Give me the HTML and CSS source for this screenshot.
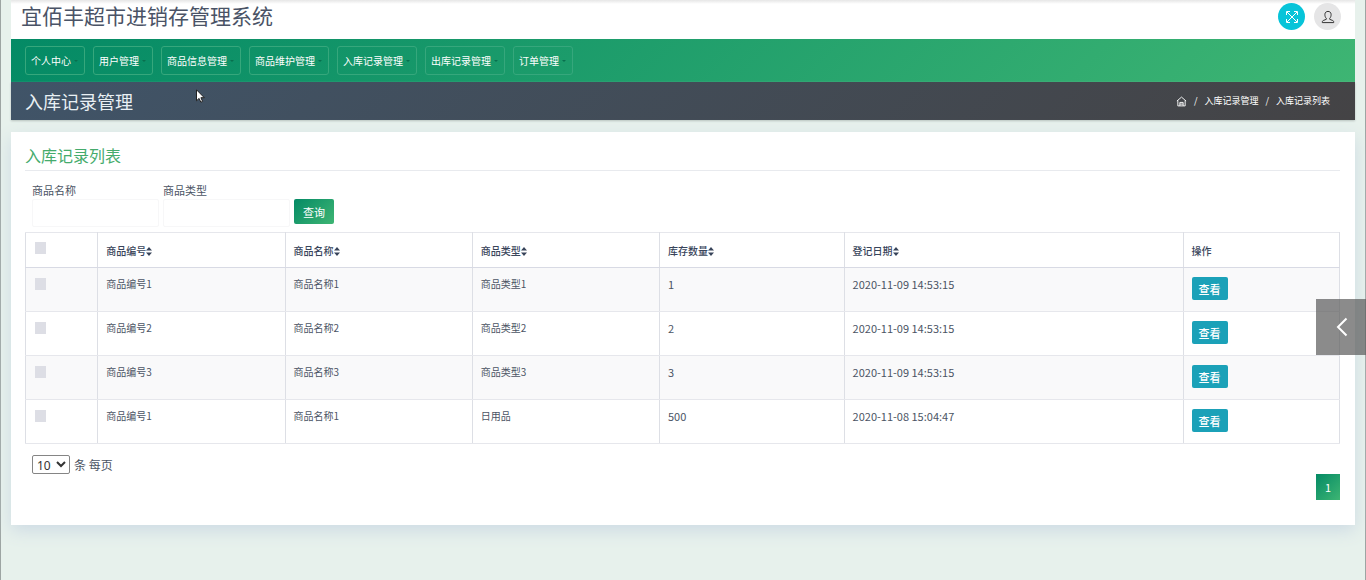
FILE: index.html
```html
<!DOCTYPE html>
<html lang="zh-CN">
<head>
<meta charset="utf-8">
<meta name="viewport" content="width=device-width, initial-scale=1">
<title>入库记录管理</title>
<link rel="stylesheet" href="styles.css">
</head>
<body>
<svg class="sprite" aria-hidden="true">
  <symbol id="sort" viewBox="0 0 6 9"><path d="M3 0 6 3.500H0zM3 9 0 5.500h6z"/></symbol>
</svg>
<div class="page">
  <header class="header">
    <h1 class="brand">宜佰丰超市进销存管理系统</h1>
    <div class="tools">
      <button class="tool tool-full" aria-label="全屏"><svg viewBox="0 0 14 14"><path d="M1.5 5V1.5H5M9 1.5h3.5V5M12.5 9v3.5H9M5 12.5H1.5V9M2 2l10 10M12 2 2 12"/></svg></button>
      <button class="tool tool-user" aria-label="用户"><svg viewBox="0 0 14 14"><path d="M5.300 8.300C4.300 7.500 3.900 6 3.900 4.500 3.900 2.500 5.200 1.400 7 1.400s3.100 1.100 3.100 3.100c0 1.500-.4 3-1.400 3.800v1l3 1.200c.8.300 1 .9 1 2.100H1.300c0-1.200.2-1.800 1-2.100l3-1.200z"/></svg></button>
    </div>
  </header>
  <nav class="nav">
    <button class="nav-item">个人中心<i class="caret"></i></button>
    <button class="nav-item">用户管理<i class="caret"></i></button>
    <button class="nav-item">商品信息管理<i class="caret"></i></button>
    <button class="nav-item">商品维护管理<i class="caret"></i></button>
    <button class="nav-item">入库记录管理<i class="caret"></i></button>
    <button class="nav-item">出库记录管理<i class="caret"></i></button>
    <button class="nav-item">订单管理<i class="caret"></i></button>
  </nav>
  <div class="titlebar">
    <h2 class="page-title">入库记录管理</h2>
    <div class="crumbs">
      <a href="#" aria-label="首页"><svg viewBox="0 0 12 12"><path d="M1 5.500 6 1.200l5 4.300M2 4.800v6h8v-6M4.200 10.800V7h3.600v3.800M4.200 8.800h3.600"/></svg></a>
      <span>/</span><a href="#">入库记录管理</a><span>/</span><span>入库记录列表</span>
    </div>
  </div>
  <main class="card">
    <h3 class="card-title">入库记录列表</h3>
    <form class="search">
      <div class="field"><label for="name">商品名称</label><input id="name" type="text"></div>
      <div class="field"><label for="type">商品类型</label><input id="type" type="text"></div>
      <button class="query" type="button">查询</button>
    </form>
    <table class="table">
      <colgroup><col class="c-check"><col class="c-text"><col class="c-text"><col class="c-text"><col class="c-count"><col class="c-date"><col class="c-action"></colgroup>
      <thead>
        <tr>
          <th><input type="checkbox" aria-label="全选"></th>
          <th>商品编号<svg class="sort"><use href="#sort"/></svg></th>
          <th>商品名称<svg class="sort"><use href="#sort"/></svg></th>
          <th>商品类型<svg class="sort"><use href="#sort"/></svg></th>
          <th>库存数量<svg class="sort"><use href="#sort"/></svg></th>
          <th>登记日期<svg class="sort"><use href="#sort"/></svg></th>
          <th>操作</th>
        </tr>
      </thead>
      <tbody>
        <tr><td><input type="checkbox" aria-label="选择第1行"></td><td>商品编号1</td><td>商品名称1</td><td>商品类型1</td><td class="num">1</td><td class="num">2020-11-09 14:53:15</td><td><button class="view">查看</button></td></tr>
        <tr><td><input type="checkbox" aria-label="选择第2行"></td><td>商品编号2</td><td>商品名称2</td><td>商品类型2</td><td class="num">2</td><td class="num">2020-11-09 14:53:15</td><td><button class="view">查看</button></td></tr>
        <tr><td><input type="checkbox" aria-label="选择第3行"></td><td>商品编号3</td><td>商品名称3</td><td>商品类型3</td><td class="num">3</td><td class="num">2020-11-09 14:53:15</td><td><button class="view">查看</button></td></tr>
        <tr><td><input type="checkbox" aria-label="选择第4行"></td><td>商品编号1</td><td>商品名称1</td><td>日用品</td><td class="num">500</td><td class="num">2020-11-08 15:04:47</td><td><button class="view">查看</button></td></tr>
      </tbody>
    </table>
    <div class="page-size">
      <select id="size"><option>10</option><option>25</option><option>50</option></select>
      <label for="size">条 每页</label>
    </div>
    <div class="pager"><button class="pager-item">1</button></div>
  </main>
</div>
<button class="drawer" aria-label="展开"><svg viewBox="0 0 12 20"><path d="M10.500 1.500 2 10l8.500 8.500"/></svg></button>
<svg class="pointer" viewBox="0 0 9 14" aria-hidden="true"><path d="M.5.8v11l2.600-2.400 1.700 3.800 1.800-.8-1.700-3.700h3.400z"/></svg>
</body>
</html>
```
FILE: styles.css
```css
* { box-sizing: border-box; }
body {
  margin: 0;
  font-family: "Noto Sans CJK SC", "Noto Sans", sans-serif;
  font-size: 10px;
  line-height: 18px;
  color: #4b5464;
  background: #e7f1ec;
}
h1, h2, h3 { margin: 0; font-weight: 400; }
button, input, select { font-family: inherit; }
button { cursor: pointer; }
svg { fill: none; stroke: currentColor; }
.sprite { display: none; }

.page {
  min-height: 100vh;
  padding: 0 10px;
  border-left: 1px solid #9da5a3;
  border-right: 1px solid #9da5a3;
}
.header {
  display: flex;
  justify-content: space-between;
  align-items: flex-end;
  padding: 0 14px 9px 10px;
  background: linear-gradient(#e6e6e6, #fff 4px);
}
.brand { font-size: 21px; line-height: 30px; color: #4a5366; }
.tools { display: flex; gap: 9px; }
.tool {
  display: grid;
  place-items: center;
  width: 27px;
  height: 27px;
  padding: 0;
  border: 0;
  border-radius: 50%;
}
.tool svg { width: 14px; height: 14px; }
.tool-full { background: #07c4d9; color: #fff; }
.tool-user { background: #e5e5e6; color: #333; }

.nav {
  display: flex;
  gap: 8px;
  padding: 7px 14px;
  background: linear-gradient(135deg, #048a65, #3eb573);
}
.nav-item {
  display: flex;
  align-items: center;
  gap: 3px;
  height: 29px;
  padding: 0 6px 0 5px;
  border: 1px solid #36a77c;
  border-radius: 3px;
  background: transparent;
  color: #fff;
  font-size: 10px;
}
.caret { border: 2px solid transparent; border-top-color: #08704f; border-bottom: 0; }

.titlebar {
  display: flex;
  justify-content: space-between;
  align-items: center;
  padding: 0 25px 0 14px;
  background: linear-gradient(135deg, #405468, #444345);
  color: #fff;
  box-shadow: 0 1px 2px #b8c2be;
}
.page-title { font-size: 18px; line-height: 38px; color: #e9f0f4; }
.crumbs { display: flex; align-items: center; gap: 7px; font-size: 9px; }
.crumbs a { display: flex; color: inherit; text-decoration: none; }
.crumbs svg { width: 11px; height: 11px; }

.card {
  margin-top: 12px;
  padding: 12px 15px 25px 14px;
  background: #fff;
  box-shadow: 0 6px 16px #cedbe4;
}
.card-title {
  padding-bottom: 3px;
  border-bottom: 1px solid #e8eaee;
  font-size: 16px;
  line-height: 23px;
  color: #45ab6c;
}
.search { display: flex; align-items: flex-end; gap: 4px; padding: 10px 7px 5px; }
.field { display: flex; flex-direction: column; font-size: 11px; }
.field input {
  width: 127px;
  height: 28px;
  padding: 4px 8px;
  border: 1px solid #f7f7f8;
  border-radius: 2px;
  background: #fff;
}
.query {
  height: 25px;
  margin-bottom: 3px;
  padding: 0 9px;
  border: 0;
  border-radius: 2px;
  background: linear-gradient(135deg, #048a65, #3eb573);
  color: #fff;
  font-size: 11px;
}

.table { width: 100%; table-layout: fixed; border-collapse: collapse; }
.c-check { width: 5.5%; }
.c-text { width: 14.25%; }
.c-count { width: 14.05%; }
.c-date { width: 25.8%; }
.c-action { width: 11.9%; }
.table th, .table td {
  padding: 7px 8px 0;
  border: 1px solid #e6e7ec;
  border-left-color: #dddfe5;
  border-right-color: #dddfe5;
  text-align: left;
  vertical-align: top;
}
.table th { height: 35px; padding-top: 9px; color: #38445a; font-weight: 500; border-bottom-color: #d8dae4; }
.table td { height: 44px; }
.table td.num { font-size: 11px; }
.table tbody tr:nth-child(odd) { background: #f9f9fa; }
.table input {
  display: block;
  appearance: none;
  width: 11px;
  height: 12px;
  margin: 3px 0 0 1px;
  background: #dddee5;
}
.table th input { margin-top: 0; }
.sort { width: 6px; height: 9px; vertical-align: -1px; fill: #38445a; stroke: none; }
.view {
  display: block;
  width: 36px;
  height: 23px;
  margin-top: 2px;
  padding: 0;
  border: 0;
  border-radius: 2px;
  background: #1ba1b8;
  color: #fff;
  font-size: 11px;
  font-weight: 500;
}

.page-size { display: flex; align-items: center; gap: 4px; padding: 11px 7px 0; font-size: 12px; }
.page-size select {
  width: 38px;
  height: 19px;
  padding: 0;
  border: 1px solid #858585;
  border-radius: 2px;
  background: #fff;
  color: #333;
  font-family: "Noto Sans", sans-serif;
  font-size: 12px;
}
.pager { display: flex; justify-content: flex-end; }
.pager-item {
  width: 24px;
  height: 26px;
  padding: 0;
  border: 0;
  background: linear-gradient(135deg, #048a65, #3eb573);
  color: #fff;
  font-size: 11px;
}
.drawer {
  position: fixed;
  right: 0;
  top: 299px;
  display: grid;
  place-items: center;
  width: 50px;
  height: 56px;
  padding: 0 0 0 2px;
  border: 0;
  background: rgba(90, 90, 90, .7);
  color: #fff;
}
.drawer svg { width: 12px; height: 20px; stroke-width: 2; }
.pointer { position: absolute; left: 196px; top: 89px; width: 9px; height: 14px; fill: #fff; stroke: #222; }
```
